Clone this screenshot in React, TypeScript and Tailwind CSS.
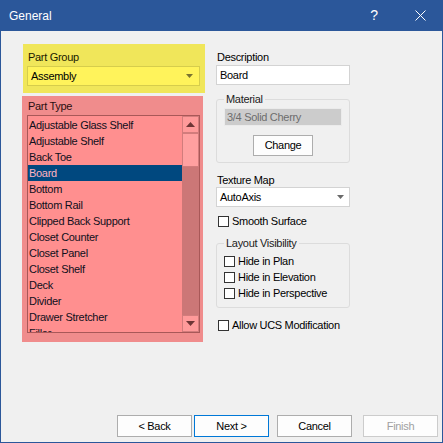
import React from "react";

const items = [
  "Adjustable Glass Shelf",
  "Adjustable Shelf",
  "Back Toe",
  "Board",
  "Bottom",
  "Bottom Rail",
  "Clipped Back Support",
  "Closet Counter",
  "Closet Panel",
  "Closet Shelf",
  "Deck",
  "Divider",
  "Drawer Stretcher",
  "Filler",
];

function Arrow({ color, up }: { color: string; up?: boolean }) {
  return (
    <svg width="9" height="5" viewBox="0 0 9 5">
      {up ? (
        <polygon points="0,5 9,5 4.5,0" fill={color} />
      ) : (
        <polygon points="0,0 9,0 4.5,5" fill={color} />
      )}
    </svg>
  );
}

function SmallArrow({ color }: { color: string }) {
  return (
    <svg width="7" height="4" viewBox="0 0 7 4">
      <polygon points="0,0 7,0 3.5,4" fill={color} />
    </svg>
  );
}

function Check({ label }: { label: string }) {
  return (
    <div className="flex h-4 items-center gap-[3px]">
      <span className="block h-[11px] w-[11px] border border-[#333333] bg-white" />
      <span className="leading-4">{label}</span>
    </div>
  );
}

function Btn({
  children,
  variant,
}: {
  children: React.ReactNode;
  variant?: "default" | "disabled";
}) {
  const cls =
    variant === "default"
      ? "border-[#0078d7] text-black"
      : variant === "disabled"
      ? "border-[#cccccc] text-[#a0a0a0]"
      : "border-[#adadad] text-black";
  return (
    <div
      className={`flex h-[22px] w-[75px] items-center justify-center border bg-[#fdfdfd] ${cls}`}
    >
      {children}
    </div>
  );
}

export default function App() {
  return (
    <div className="flex h-[443px] w-[443px] flex-col border-x border-b border-[#2b579a] bg-[#f0f0f0] font-['Liberation_Sans',Arial,sans-serif] text-[11px] tracking-[-0.3px] text-black">
      {/* Title bar */}
      <div className="-mx-px flex h-[31px] shrink-0 items-center bg-[#2b579a] text-white">
        <span className="ml-[9px] text-[12px] tracking-normal">General</span>
        <div className="ml-auto flex h-full">
          <div className="flex w-[46px] items-center justify-center text-[14px]">?</div>
          <div className="flex w-[46px] items-center justify-center">
            <svg width="11" height="11" viewBox="0 0 11 11">
              <line x1="0.5" y1="0.5" x2="10.5" y2="10.5" stroke="white" strokeWidth="1" />
              <line x1="10.5" y1="0.5" x2="0.5" y2="10.5" stroke="white" strokeWidth="1" />
            </svg>
          </div>
        </div>
      </div>

      {/* Body */}
      <div className="flex flex-1 flex-col">
        <div className="flex pl-[21px] pt-[13px]">
          {/* Left column */}
          <div className="flex w-[183px] flex-col">
            <div className="ml-px flex h-[49px] w-[182px] flex-col bg-[#f0e65a] pt-[6px]">
              <div className="ml-[5px] h-[14px] leading-[14px] text-[#1a1a00]">Part Group</div>
              <div className="ml-[4px] mt-[2px] flex h-[20px] w-[173px] items-center border border-[#d6cd4c] bg-[#fff35b] pl-[3px] pr-[6px]">
                <span>Assembly</span>
                <span className="ml-auto flex">
                  <SmallArrow color="#7a7330" />
                </span>
              </div>
            </div>
            <div className="mt-[3px] flex h-[246px] w-[181px] flex-col bg-[#f08c8c] pt-[3px]">
              <div className="ml-[6px] h-[14px] leading-[14px] text-[#2a1010]">Part Type</div>
              <div className="ml-[5px] mt-[2px] flex h-[218px] w-[173px] border border-[#a85858] bg-[#ff8f8f]">
                <div className="flex-1 overflow-hidden pt-px">
                  {items.map((it) => (
                    <div
                      key={it}
                      className={`h-4 pl-px leading-4 ${
                        it === "Board" ? "bg-[#00487f] text-[#ffb3c0]" : "text-[#10101c]"
                      }`}
                    >
                      {it}
                    </div>
                  ))}
                </div>
                <div className="flex w-[17px] flex-col bg-[#cc7777]">
                  <div className="flex h-[17px] items-center justify-center border border-[#d27c7c] bg-[#ff9a9a]">
                    <Arrow color="#6e3535" up />
                  </div>
                  <div className="h-[34px] border border-[#d27c7c] bg-[#ffa0a0]" />
                  <div className="flex-1" />
                  <div className="flex h-[17px] items-center justify-center border border-[#d27c7c] bg-[#ff9a9a]">
                    <Arrow color="#6e3535" />
                  </div>
                </div>
              </div>
            </div>
          </div>

          {/* Right column */}
          <div className="ml-[11px] flex w-[134px] flex-col pt-[6px]">
            <div className="ml-px h-[14px] leading-[14px]">Description</div>
            <div className="mt-px flex h-[20px] items-center border border-[#d3d3d3] bg-white pl-[3px]">
              Board
            </div>

            <fieldset className="mt-[7px] rounded-[3px] border border-[#dcdcdc] px-[7px] pb-[6px]">
              <legend className="h-[14px] px-[2px] leading-[14px] text-[#222]">Material</legend>
              <div className="mt-[2px] flex h-[18px] items-center border border-[#ebebeb] bg-[#cccccc] pl-[2px] text-[#6d6d6d]">
                3/4 Solid Cherry
              </div>
              <div className="mt-[9px] flex justify-center">
                <div className="flex h-[21px] w-[60px] items-center justify-center border border-[#adadad] bg-[#fdfdfd]">
                  Change
                </div>
              </div>
            </fieldset>

            <div className="ml-px mt-[10px] h-[14px] leading-[14px]">Texture Map</div>
            <div className="flex h-[20px] items-center border border-[#d3d3d3] bg-white pl-[3px] pr-[5px]">
              <span>AutoAxis</span>
              <span className="ml-auto flex">
                <SmallArrow color="#6a6a6a" />
              </span>
            </div>

            <div className="ml-[2px] mt-[6px]">
              <Check label="Smooth Surface" />
            </div>

            <fieldset className="mt-[7px] rounded-[3px] border border-[#dcdcdc] px-[7px] pb-[6px]">
              <legend className="h-[14px] px-[2px] leading-[14px] text-[#222]">Layout Visibility</legend>
              <div className="mt-[3px] flex flex-col">
                <Check label="Hide in Plan" />
                <Check label="Hide in Elevation" />
                <Check label="Hide in Perspective" />
              </div>
            </fieldset>

            <div className="ml-[2px] mt-[9px]">
              <Check label="Allow UCS Modification" />
            </div>
          </div>
        </div>

        <div className="flex-1" />

        {/* Buttons */}
        <div className="flex items-center justify-end pb-[5px] pr-[4px]">
          <Btn>&lt; Back</Btn>
          <div className="ml-[2px]">
            <Btn variant="default">Next &gt;</Btn>
          </div>
          <div className="ml-[8px]">
            <Btn>Cancel</Btn>
          </div>
          <div className="ml-[11px]">
            <Btn variant="disabled">Finish</Btn>
          </div>
        </div>
      </div>
    </div>
  );
}
